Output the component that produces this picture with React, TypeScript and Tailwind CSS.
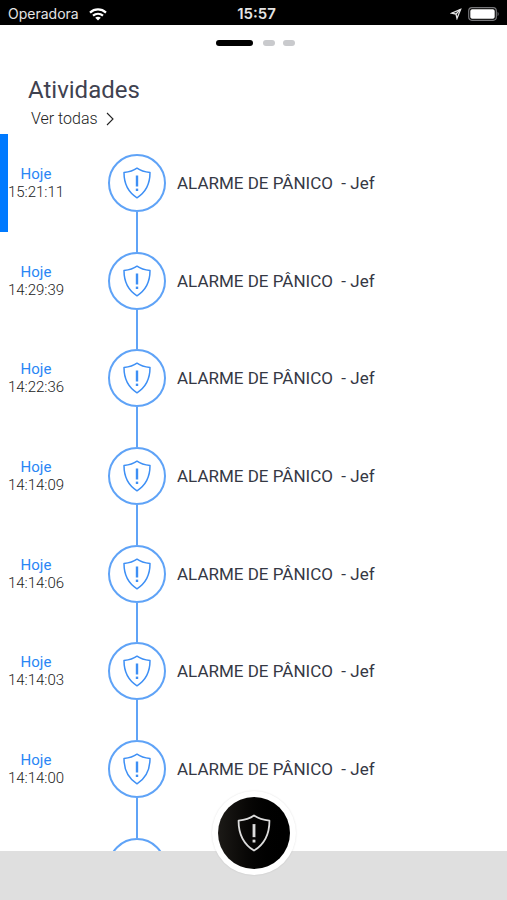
import React from "react";

const activities = [
  { day: "Hoje", time: "15:21:11" },
  { day: "Hoje", time: "14:29:39" },
  { day: "Hoje", time: "14:22:36" },
  { day: "Hoje", time: "14:14:09" },
  { day: "Hoje", time: "14:14:06" },
  { day: "Hoje", time: "14:14:03" },
  { day: "Hoje", time: "14:14:00" },
];

function Shield({ className }: { className: string }) {
  return (
    <svg viewBox="0 0 28 32" fill="none" stroke="currentColor" className={className} aria-hidden="true">
      <path
        d="M14 1.2C10.6 3.6 6 5 1 5.6C1 15 4.6 25 14 30.8C23.4 25 27 15 27 5.6C22 5 17.4 3.6 14 1.2Z"
        strokeWidth="1.5"
        strokeLinejoin="round"
      />
      <path d="M14 8.5V19.5" strokeWidth="2.4" />
      <path d="M14 21.6V24" strokeWidth="2.4" />
    </svg>
  );
}

function StatusBar() {
  return (
    <div className="grid h-[25px] shrink-0 grid-cols-[1fr_auto_1fr] items-center bg-black px-2 pt-[3px] font-[Inter,sans-serif] text-[15px] leading-5 text-[#e4e4e4]">
      <div className="flex items-center gap-1">
        <span className="text-sm">Operadora</span>
        <svg viewBox="0 0 18 13" className="ml-[6px] h-[13px] w-[18px] text-white" fill="none" stroke="currentColor" strokeWidth="2.2" aria-label="Wi-Fi">
          <path d="M1 4.6C5.6 0.4 12.4 0.4 17 4.6" />
          <path d="M4 7.7C7 5.1 11 5.1 14 7.7" />
          <path d="M9 12.5L6.2 9.7C7.8 8.3 10.2 8.3 11.8 9.7Z" fill="currentColor" stroke="none" />
        </svg>
      </div>
      <span className="pl-[6px] font-semibold">15:57</span>
      <div className="flex items-center justify-end gap-[6px]">
        <svg viewBox="0 0 12 12" className="size-3" fill="none" stroke="currentColor" strokeWidth="1.3" aria-label="Localização">
          <path d="M10.6 1.4L1.6 5.2L6 6L7 10.4Z" />
          <path d="M10.6 1.4L6 6" />
        </svg>
        <svg viewBox="0 0 31 14" className="h-[14px] w-[31px]" aria-label="Bateria">
          <rect x="0.7" y="0.7" width="27.6" height="12.6" rx="3.2" fill="none" stroke="#77777a" strokeWidth="1.2" />
          <rect x="2.3" y="2.3" width="24.4" height="9.4" rx="1.8" fill="#fff" />
          <path d="M29.6 4.8C31 5.6 31 8.4 29.6 9.2Z" fill="#77777a" />
        </svg>
      </div>
    </div>
  );
}

export default function App() {
  return (
    <div className="flex h-screen flex-col overflow-hidden bg-white font-[Roboto,sans-serif]">
      <StatusBar />
      <nav className="flex shrink-0 justify-center gap-2 pt-[15px] pl-1" aria-label="Páginas">
        <button aria-label="Página 1" className="mr-[2px] h-[6px] w-[37px] rounded-full bg-black" />
        <button aria-label="Página 2" className="h-[6px] w-3 rounded-full bg-[#c9cacd]" />
        <button aria-label="Página 3" className="h-[6px] w-3 rounded-full bg-[#c9cacd]" />
      </nav>
      <header className="shrink-0 px-7 pt-7 pb-[2px]">
        <h1 className="text-2xl leading-8 text-[#3f4250]">Atividades</h1>
        <a href="#todas" className="flex items-center gap-2 pl-[3px] text-base leading-[26px] font-light text-[#222]">
          Ver todas
          <svg viewBox="0 0 8 14" className="h-[14px] w-2" fill="none" stroke="currentColor" strokeWidth="1.1" aria-hidden="true">
            <path d="M1 1L7 7L1 13" />
          </svg>
        </a>
      </header>
      <main className="min-h-0 flex-1 overflow-y-auto [scrollbar-width:none]">
        <ol className="flex h-full flex-col">
          {activities.map((activity, index) => (
            <li key={activity.time} className="relative flex min-h-[90px] flex-1 items-center">
              {index === 0 && <span className="absolute inset-y-0 left-0 w-2 bg-[#007aff]" />}
              <div className="w-[72px] text-center text-[15px] leading-[18px]">
                <p className="text-[#2a86f5]">{activity.day}</p>
                <p className="font-light text-[#222]">{activity.time}</p>
              </div>
              <div className="ml-9 flex w-[58px] flex-col items-center self-stretch text-[#3d8ff5]">
                <span className={index === 0 ? "flex-1" : "w-[2px] flex-1 bg-[#5fa3f7]"} />
                <span className="flex size-[58px] shrink-0 items-center justify-center rounded-full border-2 border-[#5fa3f7]">
                  <Shield className="h-8 w-7" />
                </span>
                <span className="w-[2px] flex-1 bg-[#5fa3f7]" />
              </div>
              <p className="ml-[11px] text-[17px] leading-6 whitespace-pre text-[#353844]">{"ALARME DE PÂNICO  - Jef"}</p>
            </li>
          ))}
          <li className="flex h-[33px] shrink-0 overflow-hidden pl-[108px]" aria-label="Mais atividades">
            <div className="flex w-[58px] flex-col items-center">
              <span className="h-5 w-[2px] shrink-0 bg-[#5fa3f7]" />
              <span className="size-[58px] shrink-0 rounded-full border-2 border-[#5fa3f7]" />
            </div>
          </li>
        </ol>
      </main>
      <footer className="relative flex h-[49px] shrink-0 justify-center bg-[#dfdfdf]">
        <button
          aria-label="Acionar alarme de pânico"
          className="absolute bottom-[25px] flex size-[84px] items-center justify-center rounded-full bg-white shadow-[0_0_2px_rgba(0,0,0,0.12)]"
        >
          <span className="flex size-[72px] items-center justify-center rounded-full bg-linear-to-r from-[#1c1a17] to-black text-[#dcdcdc]">
            <Shield className="h-[38px] w-[34px]" />
          </span>
        </button>
      </footer>
    </div>
  );
}
